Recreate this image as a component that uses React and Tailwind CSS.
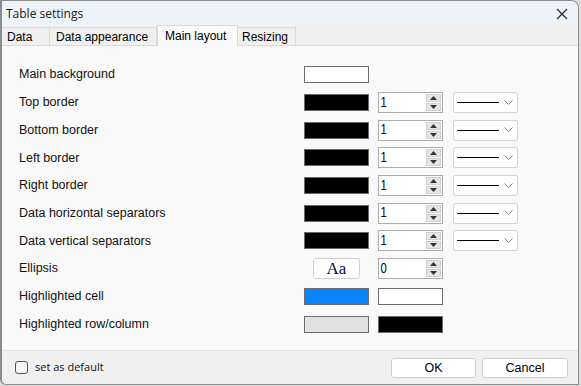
import React from "react";

const rows = [
  { label: "Main background", swatch: "#ffffff" },
  { label: "Top border", swatch: "#000000", spin: "1", line: true },
  { label: "Bottom border", swatch: "#000000", spin: "1", line: true },
  { label: "Left border", swatch: "#000000", spin: "1", line: true },
  { label: "Right border", swatch: "#000000", spin: "1", line: true },
  { label: "Data horizontal separators", swatch: "#000000", spin: "1", line: true },
  { label: "Data vertical separators", swatch: "#000000", spin: "1", line: true },
  { label: "Ellipsis", font: true, spin: "0" },
  { label: "Highlighted cell", swatch: "#0a84ff", swatch2: "#ffffff" },
  { label: "Highlighted row/column", swatch: "#e1e1e1", swatch2: "#000000" },
];

function Swatch({ color }) {
  return (
    <div
      className="w-[65px] h-[17px] border border-[#6b6b6b]"
      style={{ backgroundColor: color }}
    />
  );
}

function Spinner({ value }) {
  return (
    <div className="w-[65px] h-[21px] border border-[#adadad] bg-white flex items-center">
      <span className="flex-1 pl-[2px] text-[15px] leading-none text-black font-['Liberation_Sans',sans-serif] -mt-[3px] scale-x-75 origin-left">
        {value}
      </span>
      <div className="w-[15px] h-[17px] mr-[1px] flex flex-col gap-[1px]">
        <div className="flex-1 bg-[#e5e5e5] border border-[#cfcfcf] flex items-center justify-center">
          <svg width="7" height="4" viewBox="0 0 7 4">
            <path d="M0 4 L3.5 0 L7 4 Z" fill="#333" />
          </svg>
        </div>
        <div className="flex-1 bg-[#e5e5e5] border border-[#cfcfcf] flex items-center justify-center">
          <svg width="7" height="4" viewBox="0 0 7 4">
            <path d="M0 0 L3.5 4 L7 0 Z" fill="#333" />
          </svg>
        </div>
      </div>
    </div>
  );
}

function LineSelect() {
  return (
    <div className="w-[65px] h-[21px] border border-[#d3d3d3] rounded-[2px] bg-white flex items-center pl-[3px] pr-[4px]">
      <div className="w-[42px] h-px bg-black" />
      <div className="flex-1" />
      <svg width="9" height="6" viewBox="0 0 9 6">
        <path d="M0.5 0.5 L4.5 4.5 L8.5 0.5" stroke="#8a8a8a" strokeWidth="1" fill="none" />
      </svg>
    </div>
  );
}

export default function App() {
  return (
    <div className="w-[581px] h-[386px] bg-[#dcdcdc] font-['Liberation_Sans',sans-serif] text-black">
      <div className="w-[579px] h-[385px] flex flex-col border-l-2 border-t border-r border-b border-[#8c8c8c] rounded-tr-[8px] rounded-bl-[6px] overflow-hidden">
        {/* Title bar */}
        <div className="h-[25px] shrink-0 bg-[#eef2f9] flex items-center pl-[4px] pr-[8px]">
          <span className="text-[12px] text-[#1a1a1a] font-['Open_Sans',sans-serif] mt-[1px]">Table settings</span>
          <div className="flex-1" />
          <svg width="12" height="12" viewBox="0 0 12 12" className="mr-[2px]">
            <path d="M1 1 L11 11 M11 1 L1 11" stroke="#222" strokeWidth="1.1" />
          </svg>
        </div>

        {/* Tabs */}
        <div className="h-[20px] shrink-0 bg-[#f0f0f0] flex items-end border-b border-[#dadada]">
          <div className="h-[18px] w-[48px] border-r border-t border-[#dadada] text-[12px] pl-[5px] flex items-center">Data</div>
          <div className="h-[18px] w-[107px] border-r border-t border-[#dadada] text-[12px] pl-[6px] flex items-center">Data appearance</div>
          <div className="h-[21px] w-[81px] -mb-px bg-[#f9f9f9] border-x border-t border-[#dadada] text-[12px] pl-[7px] flex items-center">Main layout</div>
          <div className="h-[18px] w-[58px] border-r border-t border-[#dadada] text-[12px] pl-[4px] flex items-center">Resizing</div>
        </div>

        {/* Content */}
        <div className="flex-1 bg-[#f9f9f9] border-b border-[#e3e3e3] pt-[15px] pl-[17px]">
          {rows.map((r) => (
            <div key={r.label} className="h-[27.7px] flex items-center">
              <span className="w-[285px] text-[12.5px] text-[#111]">{r.label}</span>
              <div className="w-[74px]">
                {r.font ? (
                  <div className="ml-[9px] w-[47px] h-[21px] border border-[#d0d0d0] rounded-[3px] bg-white flex items-center justify-center text-[17px] text-[#0a0a40] font-['Liberation_Serif',serif]">
                    Aa
                  </div>
                ) : (
                  <Swatch color={r.swatch} />
                )}
              </div>
              <div className="w-[75px]">
                {r.spin && <Spinner value={r.spin} />}
                {r.swatch2 && <Swatch color={r.swatch2} />}
              </div>
              {r.line && <LineSelect />}
            </div>
          ))}
        </div>

        {/* Footer */}
        <div className="h-[33px] shrink-0 bg-[#f0f0f0] flex items-center pl-[13px] pr-[10px]">
          <div className="w-[13px] h-[13px] border border-[#555] rounded-[3px] bg-[#f7f7f7]" />
          <span className="ml-[7px] text-[11px] text-[#111] font-['Open_Sans',sans-serif]">set as default</span>
          <div className="flex-1" />
          <button className="w-[85px] h-[20px] bg-white border border-[#cfcfcf] rounded-[3px] text-[12.5px]">OK</button>
          <button className="ml-[6px] w-[86px] h-[20px] bg-white border border-[#cfcfcf] rounded-[3px] text-[12.5px]">Cancel</button>
        </div>
      </div>
    </div>
  );
}
